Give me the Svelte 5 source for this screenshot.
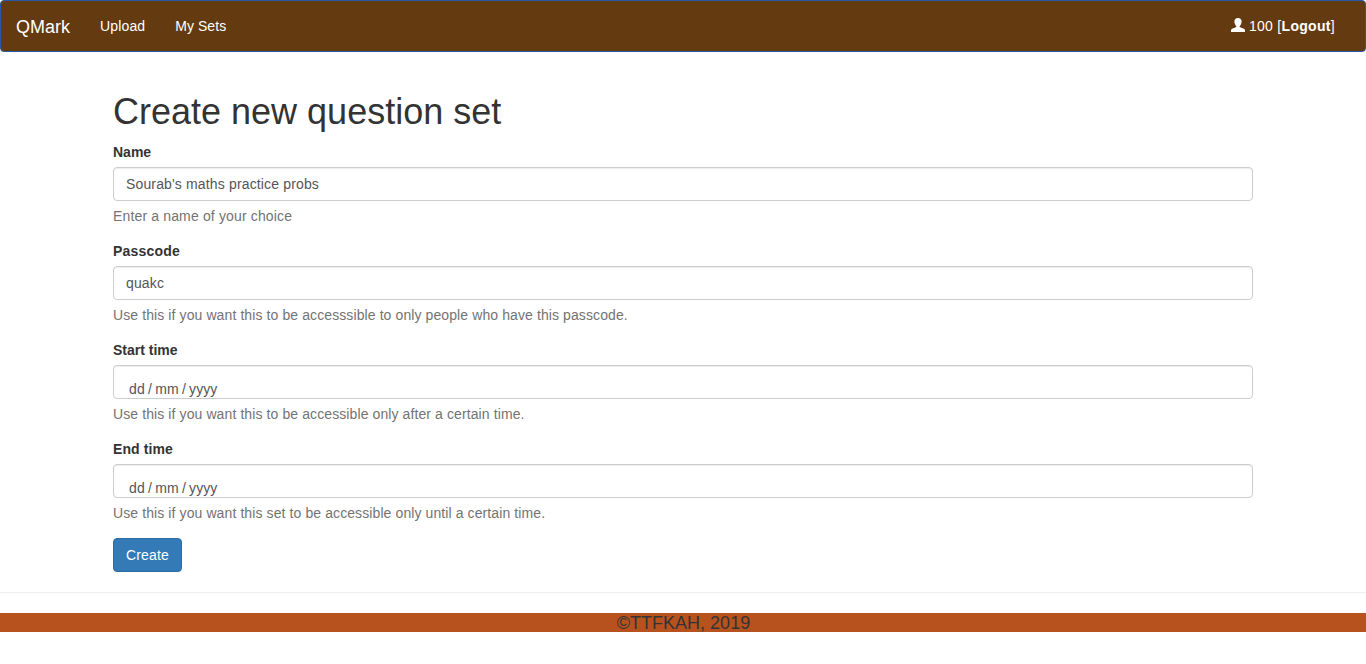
<script>
  const fields = [
    { id: 'name', label: 'Name', value: "Sourab's maths practice probs", help: 'Enter a name of your choice' },
    { id: 'passcode', label: 'Passcode', value: 'quakc', help: 'Use this if you want this to be accesssible to only people who have this passcode.' },
    { id: 'start', label: 'Start time', date: true, help: 'Use this if you want this to be accessible only after a certain time.' },
    { id: 'end', label: 'End time', date: true, help: 'Use this if you want this set to be accessible only until a certain time.' }
  ];
</script>

<nav class="navbar">
  <a class="brand" href="#home">QMark</a>
  <a class="link" href="#upload">Upload</a>
  <a class="link sets" href="#sets">My Sets</a>
  <div class="user">
    <svg class="icon" viewBox="0 0 14 14" aria-hidden="true">
      <path d="M7 0C4.7 0 3.4 1.3 3.4 3.5C3.4 5.3 4.1 6.8 5.1 7.7C5.5 8.4 5.4 9 4.8 9.3L1.2 10.8C.3 11.2 0 11.8 0 12.6V14H14V12.6C14 11.8 13.7 11.2 12.8 10.8L9.2 9.3C8.6 9 8.5 8.4 8.9 7.7C9.9 6.8 10.6 5.3 10.6 3.5C10.6 1.3 9.3 0 7 0Z" />
    </svg>
    <span>100 [<a href="#logout"><b>Logout</b></a>]</span>
  </div>
</nav>

<main class="container">
  <h1>Create new question set</h1>
  <form>
    {#each fields as field}
      <div class="group">
        <label class={field.id} for={field.id}>{field.label}</label>
        {#if field.date}
          <div class="control date" id={field.id}>
            <span>dd</span><span class="sep">/</span><span>mm</span><span class="sep">/</span><span>yyyy</span>
          </div>
        {:else}
          <input class="control" id={field.id} type="text" value={field.value} />
        {/if}
        <p class={['help', field.id]}>{field.help}</p>
      </div>
    {/each}
    <button class="btn" type="button">Create</button>
  </form>
</main>

<hr />
<footer><h4>©TTFKAH, 2019</h4></footer>

<style>
  :global(*) { box-sizing: border-box; }
  :global(body) {
    margin: 0;
    font: 14px/1.42857143 "Liberation Sans", Arial, sans-serif;
    color: #333;
    background: #fff;
  }
  a { color: inherit; text-decoration: none; }
  .navbar {
    display: flex;
    height: 52px;
    margin-bottom: 20px;
    padding-right: 30px;
    border: 1px solid #265aa5;
    border-radius: 4px;
    background: #643a10;
    color: #fff;
  }
  .brand { padding: 16px 15px 14px; font-size: 18px; line-height: 20px; }
  .link { padding: 15px; line-height: 20px; letter-spacing: 0.15px; }
  .link.sets { letter-spacing: 0.05px; }
  .user {
    display: flex;
    margin-left: auto;
    padding: 15px 0;
    line-height: 20px;
    letter-spacing: 0.3px;
  }
  .icon { width: 14px; height: 14px; margin: 2px 4px 0 0; fill: #fff; }
  .container { width: 1140px; margin: 0 auto; padding-top: 20px; }
  h1 { margin: 0 0 10px; font-size: 36px; font-weight: 500; line-height: 1.1; }
  .group { margin-bottom: 15px; }
  label { display: block; margin-bottom: 5px; font-weight: 700; letter-spacing: 0; }
  label.passcode { letter-spacing: 0.2px; }
  label.end { letter-spacing: 0.1px; }
  .control {
    display: block;
    width: 100%;
    height: 34px;
    padding: 6px 12px;
    border: 1px solid #ccc;
    border-radius: 4px;
    background: #fff;
    box-shadow: inset 0 1px 1px rgba(0, 0, 0, 0.075);
    color: #555;
    font: inherit;
    letter-spacing: 0.15px;
  }
  .date { display: flex; padding: 13px 15px 0; overflow: hidden; letter-spacing: 0.1px; }
  .sep { margin: 0 3.2px; }
  .help { margin: 5px 0 10px; color: #737373; letter-spacing: 0.1px; }
  .help.name { letter-spacing: 0.15px; }
  .btn {
    display: block;
    padding: 6px 12px;
    border: 1px solid #2e6da4;
    border-radius: 4px;
    background: #337ab7;
    color: #fff;
    font: inherit;
    letter-spacing: 0.15px;
  }
  hr { margin: 20px 0; border: 0; border-top: 1px solid #eee; }
  footer { height: 19.8px; background: #b7521e; text-align: center; }
  h4 { margin: 0; padding: 1px 0 0 1px; font-size: 18px; font-weight: 500; line-height: 1.1; }
</style>
